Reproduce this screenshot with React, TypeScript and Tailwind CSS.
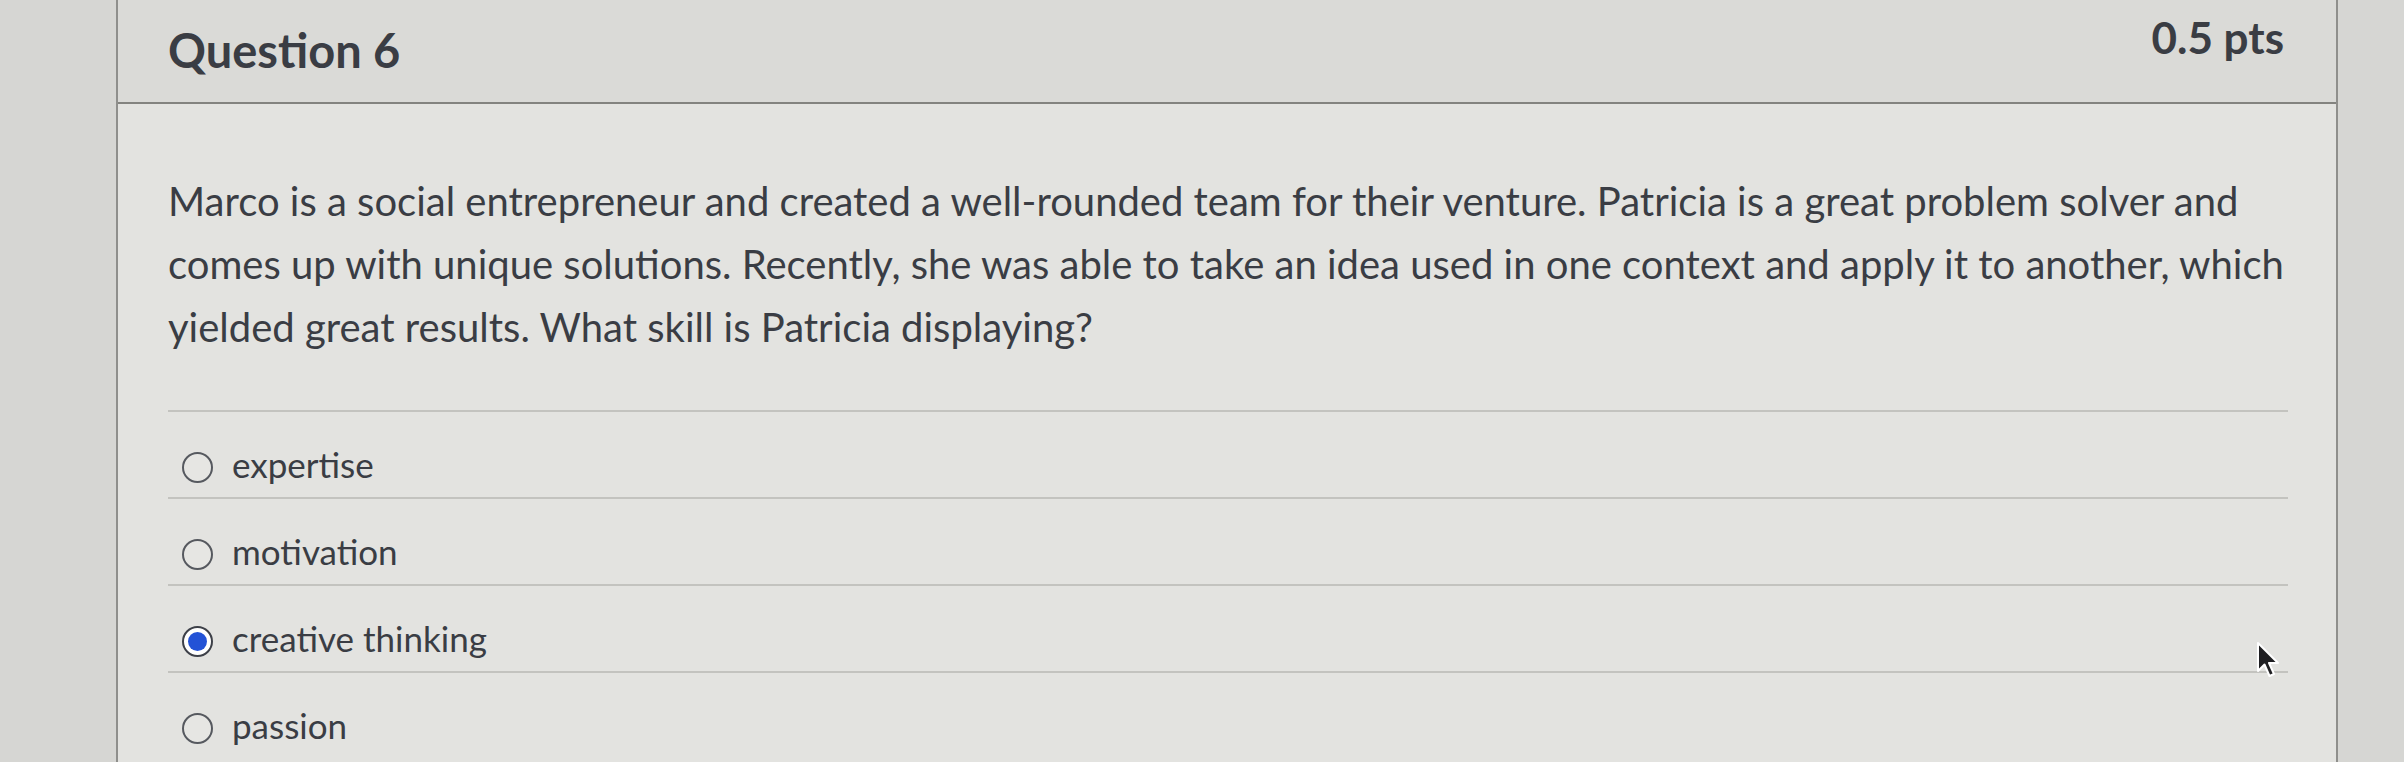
import React, { useState } from 'react';

const ANSWERS = ['expertise', 'motivation', 'creative thinking', 'passion'];

function Radio({ checked }: { checked: boolean }) {
    if (checked) {
        return (
            <span className="flex h-[31px] w-[31px] shrink-0 items-center justify-center rounded-full border-[2px] border-[#3d4048] bg-white">
                <span className="block h-[19px] w-[19px] rounded-full bg-[#2352d6]"></span>
            </span>
        );
    }
    return <span className="block h-[31px] w-[31px] shrink-0 rounded-full border-[2px] border-[#56595f] bg-[#e6e6e3]"></span>;
}

export default function App() {
    const [selected, setSelected] = useState('creative thinking');

    return (
        <div className="relative flex h-[762px] w-[2404px] overflow-hidden bg-[#d6d6d3] text-[#3a3d44] [font-family:Lato,'Noto_Sans',sans-serif]">
            {/* left margin */}
            <div className="w-[116px] shrink-0"></div>

            {/* Question panel */}
            <div className="flex w-[2222px] shrink-0 flex-col border-x-[2px] border-[#8f8f8c] bg-[#e3e3e0]">
                {/* Header */}
                <div className="flex h-[104px] shrink-0 items-start justify-between border-b-[2px] border-[#83837f] bg-[#dadad7] pl-[50px] pr-[52px]">
                    <h2 className="mt-[22px] text-[47px] leading-[1.2] font-bold">Question 6</h2>
                    <div className="mt-[11px] text-[44px] leading-[1.2] font-bold">0.5 pts</div>
                </div>

                {/* Body */}
                <div className="flex flex-col pl-[50px] pr-[48px] pt-[66px]">
                    <p className="-mr-[32px] pb-[51px] text-[40px] leading-[63px]">
                        Marco is a social entrepreneur and created a well-rounded team for their venture. Patricia is a great problem solver and<br />
                        comes up with unique solutions. Recently, she was able to take an idea used in one context and apply it to another, which<br />
                        yielded great results. What skill is Patricia displaying?
                    </p>

                    <div className="flex flex-col">
                        {ANSWERS.map(answer => (
                            <label
                                key={answer}
                                onClick={() => setSelected(answer)}
                                className="flex items-center gap-[19px] border-t-[2px] border-[#c3c3bf] pt-[31px] pb-[12px] pl-[14px]"
                            >
                                <span className="mt-[6px] flex"><Radio checked={selected === answer} /></span>
                                <span className="text-[35px] leading-[1.2]">{answer}</span>
                            </label>
                        ))}
                    </div>
                </div>
            </div>

            {/* right margin */}
            <div className="flex-1"></div>

            {/* mouse pointer */}
            <svg className="absolute left-[2256px] top-[641px]" width="28" height="38" viewBox="0 0 28 38">
                <path d="M2 2 L2 30 L8.5 23.5 L13.5 35 L18 33 L13 22 L22 22 Z" fill="#1f1f22" stroke="#ffffff" strokeWidth="2" strokeLinejoin="round" />
            </svg>
        </div>
    );
}
